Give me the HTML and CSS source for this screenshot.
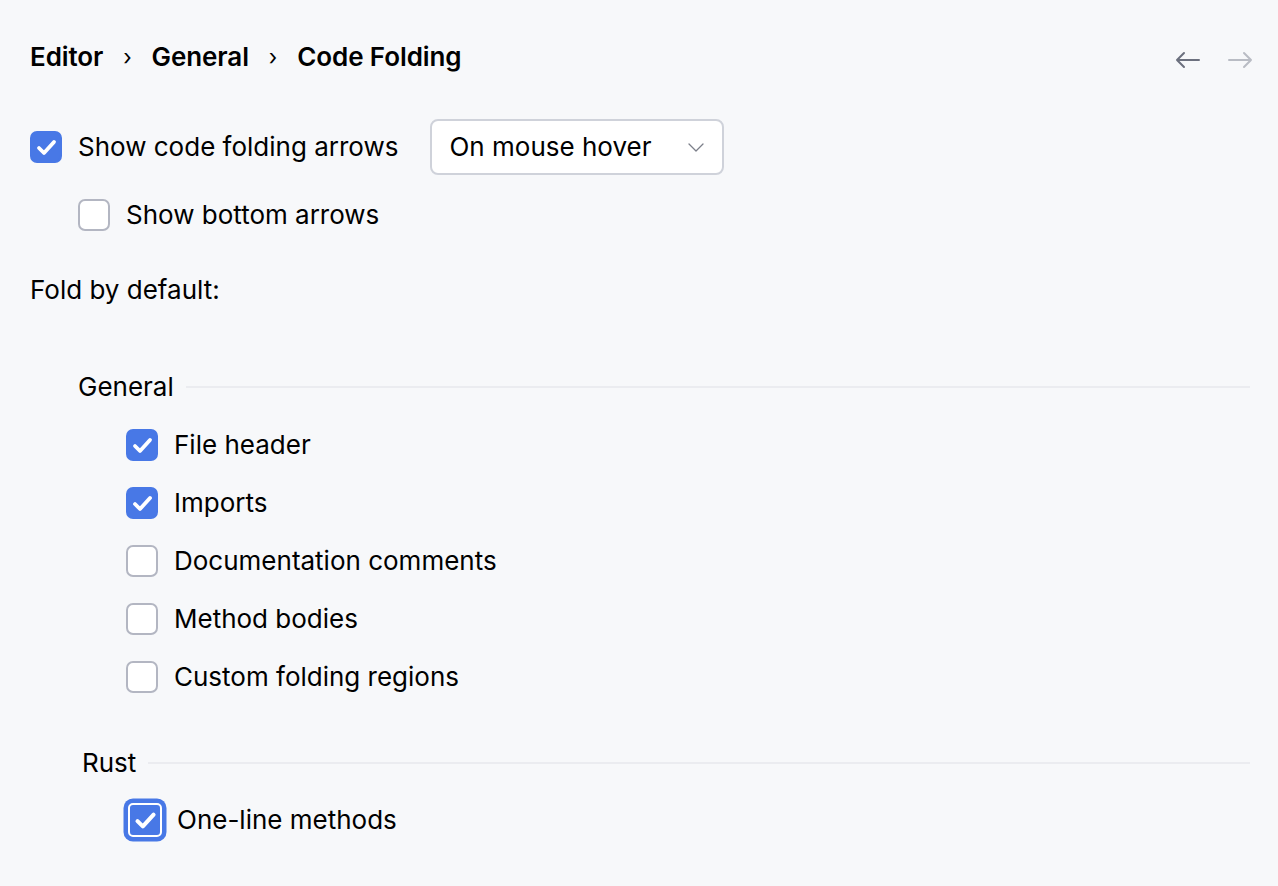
FILE: index.html
```html
<!DOCTYPE html>
<html lang="en">
<head>
  <meta charset="UTF-8">
  <title>Code Folding</title>
  <link rel="stylesheet" href="styles.css">
</head>
<body>
  <div class="page">
    <div class="header">
      <div class="breadcrumbs">
        <span>Editor</span>
        <span class="sep">›</span>
        <span>General</span>
        <span class="sep">›</span>
        <span>Code Folding</span>
      </div>
      <div class="nav">
        <svg class="nav-back" width="28" height="28" viewBox="0 0 28 28"><path d="M25 14H3M10 7L3 14l7 7" fill="none" stroke="currentColor" stroke-width="2" stroke-linecap="round" stroke-linejoin="round"/></svg>
        <svg class="nav-fwd" width="28" height="28" viewBox="0 0 28 28"><path d="M3 14h22M18 7l7 7-7 7" fill="none" stroke="currentColor" stroke-width="2" stroke-linecap="round" stroke-linejoin="round"/></svg>
      </div>
    </div>

    <div class="row row-top">
      <span class="check on"><svg viewBox="0 0 28 28"><path d="M7 15l5 5 10-11"/></svg></span>
      <span class="label">Show code folding arrows</span>
      <div class="select">
        <span>On mouse hover</span>
        <svg width="18" height="18" viewBox="0 0 18 18"><path d="M2 6l7 7 7-7" fill="none" stroke="#7c7f8a" stroke-width="1.3" stroke-linecap="round" stroke-linejoin="round"/></svg>
      </div>
    </div>
    <div class="row row-sub">
      <span class="check"></span>
      <span class="label">Show bottom arrows</span>
    </div>

    <div class="fold-title">Fold by default:</div>

    <div class="group group-general">
      <div class="group-title"><span>General</span><span class="line"></span></div>
      <div class="group-body">
        <div class="row item"><span class="check on"><svg viewBox="0 0 28 28"><path d="M7 15l5 5 10-11"/></svg></span><span class="label">File header</span></div>
        <div class="row item"><span class="check on"><svg viewBox="0 0 28 28"><path d="M7 15l5 5 10-11"/></svg></span><span class="label">Imports</span></div>
        <div class="row item"><span class="check"></span><span class="label">Documentation comments</span></div>
        <div class="row item"><span class="check"></span><span class="label">Method bodies</span></div>
        <div class="row item"><span class="check"></span><span class="label">Custom folding regions</span></div>
      </div>
    </div>

    <div class="group group-rust">
      <div class="group-title"><span>Rust</span><span class="line"></span></div>
      <div class="group-body">
        <div class="row item"><span class="check on focus"><svg viewBox="0 0 28 28"><path d="M7 15l5 5 10-11"/></svg></span><span class="label">One-line methods</span></div>
      </div>
    </div>
  </div>
</body>
</html>
```

FILE: styles.css
```css
body {
  margin: 0;
  background-color: #f7f8fa;
  color: #000;
  font-family: Inter, "Noto Sans", sans-serif;
  font-size: 26px;
  line-height: 32px;
}

.page {
  padding: 36px 28px 0 30px;
}

.header {
  display: flex;
  align-items: center;
  justify-content: space-between;
  height: 42px;
}

.breadcrumbs {
  display: flex;
  align-items: center;
  gap: 20px;
  font-weight: 600;
  letter-spacing: -0.1px;
}

.breadcrumbs .sep {
  font-weight: 400;
  font-size: 22px;
}

.nav {
  display: flex;
  gap: 24px;
  padding-top: 6px;
  margin-right: -4px;
}

.nav-back {
  color: #6c707e;
}

.nav-fwd {
  color: #b9bcc4;
}

.row {
  display: flex;
  align-items: center;
}

.row-top {
  margin-top: 40px;
  height: 58px;
}

.row-sub {
  margin-left: 48px;
  margin-top: 23px;
  height: 32px;
}

.check {
  box-sizing: border-box;
  width: 32px;
  height: 32px;
  border: 2px solid #b3b6c2;
  border-radius: 7px;
  background: #fff;
  margin-right: 16px;
  flex-shrink: 0;
  display: flex;
}

.check.on {
  background: #4878e6;
  border-color: #4878e6;
}

.check svg {
  width: 28px;
  height: 28px;
}

.check svg path {
  fill: none;
  stroke: #fff;
  stroke-width: 3.8;
  stroke-linecap: round;
  stroke-linejoin: round;
}

.check.focus {
  width: 34px;
  height: 34px;
  border-color: #fff;
  border-radius: 5px;
  box-shadow: 0 0 0 4.5px #4878e6;
  margin-left: -1px;
  margin-right: 15px;
}

.check.focus svg {
  width: 30px;
  height: 30px;
}

.select {
  display: flex;
  align-items: center;
  justify-content: space-between;
  box-sizing: border-box;
  width: 294px;
  height: 56px;
  margin-left: 32px;
  padding: 0 17px 0 17px;
  background: #fff;
  border: 2px solid #cfd2da;
  border-radius: 8px;
}

.fold-title {
  margin-top: 43px;
}

.group {
  margin-left: 48px;
}

.group-general {
  margin-top: 65px;
}

.group-rust {
  margin-top: 41px;
  margin-left: 52px;
}

.group-title {
  display: flex;
  align-items: center;
  height: 32px;
}

.group-title .line {
  flex: 1;
  height: 2px;
  background: #ebecf0;
  margin-left: 12px;
}

.group-body {
  margin-left: 48px;
  padding-top: 13px;
}

.group-rust .group-body {
  margin-left: 47px;
  padding-top: 12px;
}

.item {
  height: 58px;
}
```
